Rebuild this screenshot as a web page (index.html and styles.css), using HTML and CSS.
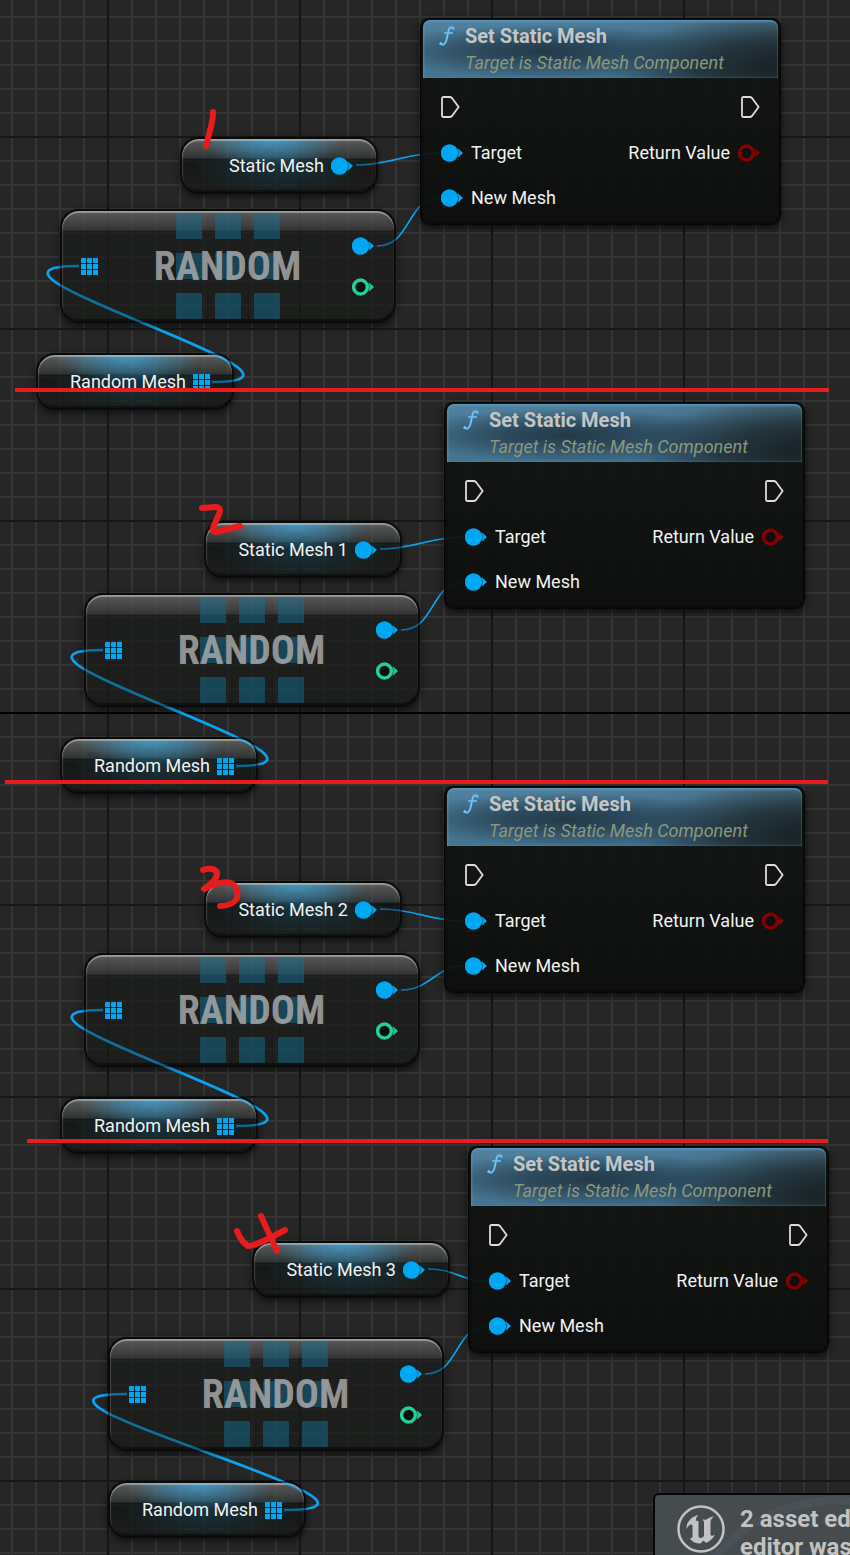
FILE: index.html
```html
<!DOCTYPE html>
<html lang="en">
<head>
<meta charset="utf-8">
<meta name="viewport" content="width=device-width, initial-scale=1">
<title>Event Graph</title>
<link rel="stylesheet" href="styles.css">
</head>
<body>
<svg class="defs" aria-hidden="true">
  <defs>
    <symbol id="pin" viewBox="0 0 22 18"><circle cx="8.500" cy="9" r="8.700" fill="currentColor"/><path d="M16.500 4Q18.500 9 16.500 14L22 9Z" fill="currentColor"/></symbol>
    <symbol id="pin-open" viewBox="0 0 22 18"><circle cx="8.500" cy="9" r="6.900" fill="#0b0f0e" stroke="currentColor" stroke-width="3.500"/><path d="M16.500 4Q18.500 9 16.500 14L22 9Z" fill="currentColor"/></symbol>
    <symbol id="exec" viewBox="0 0 19 22"><path d="M1 2.500Q1 1 2.500 1H8.500Q10 1 11 2L17.600 11L11 20Q10 21 8.500 21H2.500Q1 21 1 19.500Z" fill="none" stroke="#dcdcdc" stroke-width="1.800"/></symbol>
    <symbol id="array" viewBox="0 0 17 17"><path d="M0 0h5v5H0zM6 0h5v5H6zM12 0h5v5h-5zM0 6h5v5H0zM6 6h5v5H6zM12 6h5v5h-5zM0 12h5v5H0zM6 12h5v5H6zM12 12h5v5h-5z" fill="currentColor"/></symbol>
    <symbol id="func" viewBox="0 0 16 20"><path d="M14.500 2.300C12.800.300 10.400 1 9.600 4.500L7.300 14.500C6.500 18 4 19.600 1.500 18" fill="none" stroke="#6fc3f7" stroke-width="1.900" stroke-linecap="round"/><path d="M5 7H14" stroke="#6fc3f7" stroke-width="1.500"/><circle cx="1.800" cy="17.500" r="1.400" fill="#6fc3f7"/><circle cx="14.200" cy="2.600" r="1.200" fill="#6fc3f7"/></symbol>
    <path id="loop" d="M212 382C359 382 -68 266 79 266"/>
    <g id="wires">
      <g class="thin">
        <path d="M356 165C392 165 404 153 440 153"/>
        <path d="M377 246C412 246 406 198 440 198"/>
        <path d="M380 549C416 549 428 537 464 537"/>
        <path d="M401 630C436 630 430 582 464 582"/>
        <path d="M380 909C416 909 428 921 464 921"/>
        <path d="M401 990C430 990 436 966 464 966"/>
        <path d="M428 1269C456 1269 460 1281 488 1281"/>
        <path d="M425 1374C460 1374 454 1326 488 1326"/>
      </g>
      <g class="thick">
        <use href="#loop"/>
        <use href="#loop" x="24" y="384"/>
        <use href="#loop" x="24" y="744"/>
        <path d="M284 1510C446 1510 -35 1394 127 1394"/>
      </g>
    </g>
  </defs>
</svg>

<main class="graph">
  <svg class="layer wires" aria-hidden="true"><use href="#wires"/></svg>

  <article class="node call call-1">
    <header class="head"><svg class="func"><use href="#func"/></svg><h2>Set Static Mesh</h2><p>Target is Static Mesh Component</p></header>
    <div class="rows">
      <div class="row"><svg class="exec"><use href="#exec"/></svg><svg class="exec"><use href="#exec"/></svg></div>
      <div class="row"><span class="port"><svg class="pin"><use href="#pin"/></svg>Target</span><span class="port">Return Value<svg class="pin red"><use href="#pin-open"/></svg></span></div>
      <div class="row"><span class="port"><svg class="pin"><use href="#pin"/></svg>New Mesh</span></div>
    </div>
  </article>
  <article class="node var var-1"><span>Static Mesh</span><svg class="pin"><use href="#pin"/></svg></article>
  <article class="node random random-1">
    <svg class="array"><use href="#array"/></svg>
    <div class="tiles"><i></i><i></i><i></i><i></i><i></i><i></i><i></i><i></i><i></i></div>
    <h2>RANDOM</h2>
    <div class="outs"><svg class="pin"><use href="#pin"/></svg><svg class="pin green"><use href="#pin-open"/></svg></div>
  </article>
  <article class="node var list list-1"><span>Random Mesh</span><svg class="array"><use href="#array"/></svg></article>

  <article class="node call call-2">
    <header class="head"><svg class="func"><use href="#func"/></svg><h2>Set Static Mesh</h2><p>Target is Static Mesh Component</p></header>
    <div class="rows">
      <div class="row"><svg class="exec"><use href="#exec"/></svg><svg class="exec"><use href="#exec"/></svg></div>
      <div class="row"><span class="port"><svg class="pin"><use href="#pin"/></svg>Target</span><span class="port">Return Value<svg class="pin red"><use href="#pin-open"/></svg></span></div>
      <div class="row"><span class="port"><svg class="pin"><use href="#pin"/></svg>New Mesh</span></div>
    </div>
  </article>
  <article class="node var var-2"><span>Static Mesh 1</span><svg class="pin"><use href="#pin"/></svg></article>
  <article class="node random random-2">
    <svg class="array"><use href="#array"/></svg>
    <div class="tiles"><i></i><i></i><i></i><i></i><i></i><i></i><i></i><i></i><i></i></div>
    <h2>RANDOM</h2>
    <div class="outs"><svg class="pin"><use href="#pin"/></svg><svg class="pin green"><use href="#pin-open"/></svg></div>
  </article>
  <article class="node var list list-2"><span>Random Mesh</span><svg class="array"><use href="#array"/></svg></article>

  <article class="node call call-3">
    <header class="head"><svg class="func"><use href="#func"/></svg><h2>Set Static Mesh</h2><p>Target is Static Mesh Component</p></header>
    <div class="rows">
      <div class="row"><svg class="exec"><use href="#exec"/></svg><svg class="exec"><use href="#exec"/></svg></div>
      <div class="row"><span class="port"><svg class="pin"><use href="#pin"/></svg>Target</span><span class="port">Return Value<svg class="pin red"><use href="#pin-open"/></svg></span></div>
      <div class="row"><span class="port"><svg class="pin"><use href="#pin"/></svg>New Mesh</span></div>
    </div>
  </article>
  <article class="node var var-3"><span>Static Mesh 2</span><svg class="pin"><use href="#pin"/></svg></article>
  <article class="node random random-3">
    <svg class="array"><use href="#array"/></svg>
    <div class="tiles"><i></i><i></i><i></i><i></i><i></i><i></i><i></i><i></i><i></i></div>
    <h2>RANDOM</h2>
    <div class="outs"><svg class="pin"><use href="#pin"/></svg><svg class="pin green"><use href="#pin-open"/></svg></div>
  </article>
  <article class="node var list list-3"><span>Random Mesh</span><svg class="array"><use href="#array"/></svg></article>

  <article class="node call call-4">
    <header class="head"><svg class="func"><use href="#func"/></svg><h2>Set Static Mesh</h2><p>Target is Static Mesh Component</p></header>
    <div class="rows">
      <div class="row"><svg class="exec"><use href="#exec"/></svg><svg class="exec"><use href="#exec"/></svg></div>
      <div class="row"><span class="port"><svg class="pin"><use href="#pin"/></svg>Target</span><span class="port">Return Value<svg class="pin red"><use href="#pin-open"/></svg></span></div>
      <div class="row"><span class="port"><svg class="pin"><use href="#pin"/></svg>New Mesh</span></div>
    </div>
  </article>
  <article class="node var var-4"><span>Static Mesh 3</span><svg class="pin"><use href="#pin"/></svg></article>
  <article class="node random random-4">
    <svg class="array"><use href="#array"/></svg>
    <div class="tiles"><i></i><i></i><i></i><i></i><i></i><i></i><i></i><i></i><i></i></div>
    <h2>RANDOM</h2>
    <div class="outs"><svg class="pin"><use href="#pin"/></svg><svg class="pin green"><use href="#pin-open"/></svg></div>
  </article>
  <article class="node var list list-4"><span>Random Mesh</span><svg class="array"><use href="#array"/></svg></article>

  <svg class="layer wires through" aria-hidden="true"><use href="#wires"/></svg>

  <svg class="layer marks" aria-hidden="true">
    <g class="rules"><path d="M15 390H829"/><path d="M5 782H828"/><path d="M27 1141H828"/></g>
    <g class="digits">
      <path d="M213 112Q213 120 211 127T206 146"/>
      <path d="M202 508L216 507Q222 508 219 514L213 528Q212 532 216 532L240 526"/>
      <path d="M203 870Q213 867 217 872Q218 880 204 889Q224 879 233 884Q239 890 237 898Q233 906 220 906"/>
      <path d="M237 1231Q242 1243 248 1246Q256 1246 285 1230M261 1216L277 1251"/>
    </g>
  </svg>

  <aside class="toast">
    <svg class="logo" viewBox="0 0 48 48" aria-hidden="true">
      <circle cx="24" cy="24" r="22.500" fill="none" stroke="#c2c2c2" stroke-width="2.500"/>
      <path d="M21 10C14 12 9 17.500 9.500 24C11.500 20.500 13 19 14.500 19.500C15.500 20 15.500 21 15.500 22V31C15.500 33 14.500 33.500 12.500 33C15.500 37.500 19.500 38.500 23.500 38.500L26.500 35.500L29 38C33.500 36 36.500 33 38 29.500C36 31 34 31.500 33.500 29.500V17C33.500 14.500 35 13 37 11.500C33 12 30.500 13.500 28.500 15C27.500 14.500 26.500 14.500 25.500 14.500C27 16 27 17 27 18.500V31C25 33.500 22 33.500 21.500 31V17C21.500 16 20.500 15.500 19 16C18.500 14 19.500 12.500 21 10Z" fill="#c2c2c2"/>
    </svg>
    <p>2 asset ed<br>editor was</p>
  </aside>
</main>
</body>
</html>
```
FILE: styles.css
```css
* { box-sizing: border-box; }

body {
  margin: 0;
  background: #262626;
  color: #f2f2f2;
  font: 18px/24px Roboto, "Liberation Sans", sans-serif;
}

h2, p { margin: 0; }

.defs { position: absolute; width: 0; height: 0; }

/* Canvas: 24px cells, a darker line every eight cells */
.graph {
  position: relative;
  min-height: 100vh;
  overflow: hidden;
  background:
    linear-gradient(#020202, #020202) 0 712px / 100% 2px no-repeat,
    linear-gradient(90deg, #161616 2px, transparent 2px) 107px 0 / 192px 192px,
    linear-gradient(#161616 2px, transparent 2px) 0 136px / 192px 192px,
    linear-gradient(90deg, #353535 2px, transparent 2px) 11px 0 / 24px 24px,
    linear-gradient(#353535 2px, transparent 2px) 0 16px / 24px 24px,
    #262626;
}

.layer { position: absolute; inset: 0; width: 100%; height: 100%; pointer-events: none; }
.wires { fill: none; stroke: #0aa5f2; }
.through { opacity: .45; }
.thin { stroke-width: 1.5; }
.thick { stroke-width: 2.5; }
.marks { z-index: 3; fill: none; stroke: #e81c1c; }
.rules { stroke-width: 4; }
.digits { stroke-width: 6; stroke-linecap: round; stroke-linejoin: round; }

.node { position: absolute; white-space: nowrap; }

.pin { display: block; flex: none; width: 22px; height: 18px; color: #00a8f4; }
.pin.red { color: #850000; }
.pin.green { color: #22cf98; }
.array { display: block; flex: none; width: 17px; height: 17px; color: #00a8f4; }
.exec { display: block; width: 19px; height: 22px; }

/* Function call */
.call {
  z-index: 2;
  width: 361px;
  padding: 1px 2px;
  border-radius: 9px;
  border: 1px solid #050606;
  background: linear-gradient(rgba(19, 22, 19, .9), rgba(11, 14, 12, .93));
  box-shadow: 0 3px 8px rgba(0, 0, 0, .65), inset 0 0 3px #000;
}
.head {
  display: grid;
  grid-template-columns: 26px 1fr;
  align-items: center;
  height: 58px;
  padding: 2px 16px;
  border-radius: 7px 7px 0 0;
  background:
    radial-gradient(ellipse 46% 46% at 34% 54%, rgba(30, 48, 60, .85), rgba(30, 48, 60, .6) 40%, transparent),
    radial-gradient(ellipse 50% 90% at 102% 80%, #1b262b 15%, rgba(27, 38, 43, .7) 50%, transparent),
    linear-gradient(rgba(112, 168, 200, .3), transparent 45%),
    linear-gradient(90deg, #467490, #3f6c89 60%, #3a5868);
  box-shadow: inset 0 2px 2px rgba(98, 157, 200, .6), inset 1px 0 3px rgba(98, 157, 200, .5);
}
.head h2 { font-size: 20px; line-height: 26px; font-weight: 700; color: #c3c5c6; }
.head p { grid-column: 2; font-size: 18px; line-height: 26px; font-style: italic; color: #8b977d; }
.func { width: 16px; height: 20px; }
.rows { padding: 5px 18px 3px; }
.row { display: flex; align-items: center; justify-content: space-between; height: 45px; }
.row:first-child { height: 47px; }
.port { display: flex; align-items: center; gap: 8px; }

/* Glass look shared by variable and random nodes */
.var, .random {
  border: 2px solid #090a0a;
  box-shadow: 0 3px 7px rgba(0, 0, 0, .6), inset 0 2px 1px rgba(215, 215, 215, .5), inset 0 -2px 1px rgba(0, 0, 0, .5), inset 1px 0 1px rgba(150, 150, 150, .3);
}
.var {
  display: flex;
  align-items: center;
  justify-content: flex-end;
  gap: 7px;
  width: 198px;
  height: 57px;
  padding: 1px 23px 0;
  border-radius: 19px;
  background:
    radial-gradient(ellipse 38% 50% at 46% 0%, rgba(67, 164, 213, .85), rgba(67, 164, 213, .4) 55%, transparent),
    radial-gradient(ellipse 45% 55% at 50% 50%, rgba(22, 75, 95, .5), transparent),
    linear-gradient(rgba(120, 120, 120, .65), rgba(55, 60, 60, .6) 19px, rgba(16, 19, 18, .75) 20px, rgba(22, 25, 23, .7));
}
.list { padding-right: 22px; }

.random {
  display: flex;
  align-items: center;
  justify-content: space-between;
  width: 336px;
  height: 114px;
  padding: 0 20px 0 19px;
  border-radius: 19px;
  background: linear-gradient(rgba(112, 112, 112, .7), rgba(60, 60, 60, .65) 19px, rgba(25, 26, 26, .72) 20px, rgba(24, 27, 24, .7));
}
.random h2 {
  padding: 2px 0 0 5px;
  font: 700 40px/48px "Roboto Condensed", Roboto, sans-serif;
  color: rgba(178, 178, 178, .78);
  z-index: 1;
}
.tiles {
  position: absolute;
  inset: 0;
  display: grid;
  grid-template-columns: repeat(3, 26px);
  grid-template-rows: repeat(3, 26px);
  gap: 14px 13px;
  place-content: center;
}
.tiles i { background: rgba(20, 112, 150, .48); }
.outs { display: grid; gap: 23px; }

/* Node places on the canvas */
.call-1 { left: 420px; top: 18px; }
.call-2 { left: 444px; top: 402px; }
.call-3 { left: 444px; top: 786px; }
.call-4 { left: 468px; top: 1146px; }
.var-1 { left: 180px; top: 137px; }
.var-2 { left: 204px; top: 521px; }
.var-3 { left: 204px; top: 881px; }
.var-4 { left: 252px; top: 1241px; }
.random-1 { left: 60px; top: 209px; }
.random-2 { left: 84px; top: 593px; }
.random-3 { left: 84px; top: 953px; }
.random-4 { left: 108px; top: 1337px; }
.list-1 { left: 36px; top: 353px; }
.list-2 { left: 60px; top: 737px; }
.list-3 { left: 60px; top: 1097px; }
.list-4 { left: 108px; top: 1481px; }

/* Notification rising from the corner */
.toast {
  position: absolute;
  z-index: 4;
  right: 0;
  bottom: 0;
  display: flex;
  gap: 15px;
  width: 197px;
  height: 62px;
  padding: 10px 0 0 22px;
  overflow: hidden;
  border: solid #060606;
  border-width: 2px 0 0 2px;
  border-radius: 6px 0 0 0;
  background: radial-gradient(circle at 180px 160px, transparent 150px, rgba(84, 91, 104, .35) 151px 158px, transparent 159px), #464b4e;
  color: #c2c2c2;
  font-size: 24px;
  line-height: 28px;
  font-weight: 700;
  white-space: nowrap;
}
.logo { flex: none; width: 48px; height: 48px; }
```
